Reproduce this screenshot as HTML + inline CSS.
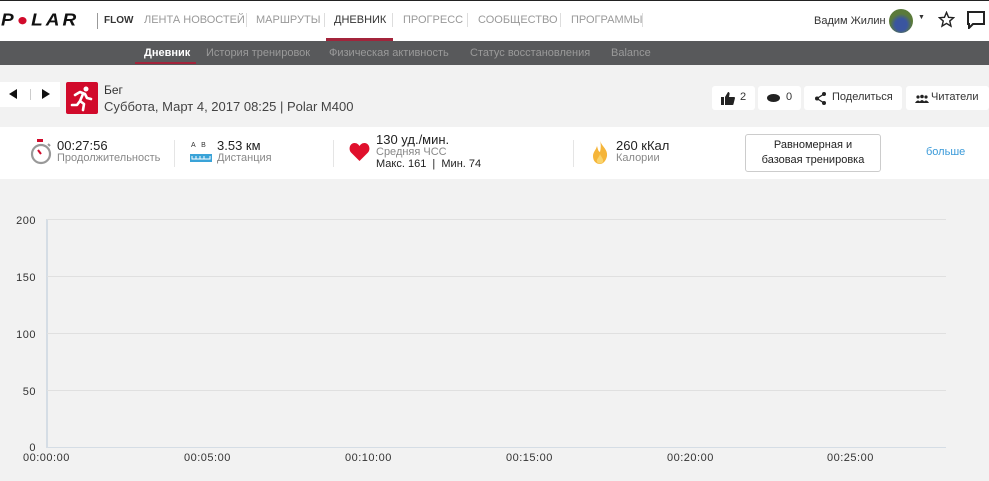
<!DOCTYPE html>
<html><head><meta charset="utf-8"><style>
*{margin:0;padding:0;box-sizing:border-box}
body{width:989px;height:481px;overflow:hidden;background:#f2f2f2;font-family:"Liberation Sans",Arial,sans-serif;position:relative;color:#333}
.a{position:absolute;white-space:nowrap}
.top{left:0;top:0;width:989px;height:41px;background:#fff;border-top:1px solid #222}
.nav{font-size:11px;color:#999;top:14px}
.sep{width:1px;height:14px;background:#ddd;top:13px}
.sub{left:0;top:41px;width:989px;height:24px;background:#58595b}
.subt{font-size:11px;color:#9a9a9a;top:47px}
.stats{left:0;top:127px;width:989px;height:52px;background:#fff}
.btn{background:#fff;border-radius:3px;height:24px;top:86px;font-size:11px;color:#333}
.grid{left:47px;width:899px;height:1px;background:#e0e0e0}
.yl{font-size:11px;color:#333;width:36px;text-align:right;left:0;letter-spacing:.5px}
.xl{font-size:11px;color:#333;top:452px;letter-spacing:.5px}
.lbl{font-size:11px;color:#888}
.val{font-size:13px;color:#222}
</style></head><body>
<div class="a top"></div>
<div class="a" style="left:1px;top:10px;font:italic 900 19px 'Liberation Sans';letter-spacing:3px;color:#111;transform:scaleY(0.9)">P<span style="color:#d10a2b">●</span>LAR</div>
<div class="a" style="left:97px;top:13px;width:1px;height:16px;background:#999"></div>
<div class="a" style="left:104px;top:15px;font-size:10px;font-weight:bold;color:#333">FLOW</div>
<div class="a nav" style="left:144px">ЛЕНТА НОВОСТЕЙ</div>
<div class="a sep" style="left:246px"></div>
<div class="a nav" style="left:256px">МАРШРУТЫ</div>
<div class="a sep" style="left:324px"></div>
<div class="a nav" style="left:334px;color:#333">ДНЕВНИК</div>
<div class="a" style="left:326px;top:38px;width:67px;height:3px;background:#a3243b"></div>
<div class="a sep" style="left:392px"></div>
<div class="a nav" style="left:403px">ПРОГРЕСС</div>
<div class="a sep" style="left:467px"></div>
<div class="a nav" style="left:478px">СООБЩЕСТВО</div>
<div class="a sep" style="left:560px"></div>
<div class="a nav" style="left:571px">ПРОГРАММЫ</div>
<div class="a sep" style="left:642px"></div>
<div class="a" style="left:814px;top:15px;font-size:11px;color:#333">Вадим Жилин</div>
<div class="a" style="left:889px;top:9px;width:24px;height:24px;border-radius:50%;background:radial-gradient(circle at 50% 65%,#3a55a0 30%,#5a7a3a 55%)"></div>
<div class="a" style="left:918px;top:14px;font-size:7px">▼</div>
<svg class="a" style="left:938px;top:11px" width="17" height="17" viewBox="0 0 24 24"><path d="M12 2l2.9 6.9 7.1.6-5.4 4.7 1.7 7.1L12 17.5 5.7 21.3l1.7-7.1L2 9.5l7.1-.6z" fill="none" stroke="#222" stroke-width="2"/></svg>
<svg class="a" style="left:967px;top:11px" width="18" height="18" viewBox="0 0 18 18"><path d="M1 1h16v12H6l-4 4V13H1z" fill="none" stroke="#222" stroke-width="2"/></svg>
<div class="a sub"></div>
<div class="a subt" style="left:144px;color:#fff;font-weight:bold">Дневник</div>
<div class="a" style="left:135px;top:62px;width:61px;height:2px;background:#a3243b"></div>
<div class="a subt" style="left:206px">История тренировок</div>
<div class="a subt" style="left:329px">Физическая активность</div>
<div class="a subt" style="left:470px">Статус восстановления</div>
<div class="a subt" style="left:611px">Balance</div>
<div class="a" style="left:0;top:82px;width:60px;height:25px;background:#fff"></div>
<svg class="a" style="left:9px;top:89px" width="8" height="10"><path d="M8 0v10L0 5z" fill="#111"/></svg>
<div class="a" style="left:30px;top:89px;width:1px;height:11px;background:#ccc"></div>
<svg class="a" style="left:42px;top:89px" width="8" height="10"><path d="M0 0v10l8-5z" fill="#111"/></svg>
<div class="a" style="left:66px;top:82px;width:32px;height:32px;background:#d10a2b;border-radius:2px"></div>
<svg class="a" style="left:66px;top:82px" width="32" height="32" viewBox="0 0 32 32"><circle cx="20" cy="7" r="2.5" fill="#fff"/><path d="M9 13l5-3 5 2 2 4 4 1M17 12l-3 7 4 3-1 6M14 19l-3 4-5 0" fill="none" stroke="#fff" stroke-width="2.6" stroke-linecap="round" stroke-linejoin="round"/></svg>
<div class="a" style="left:104px;top:83px;font-size:12px">Бег</div>
<div class="a" style="left:104px;top:99px;font-size:13px;color:#444">Суббота, Март 4, 2017 08:25 | Polar M400</div>
<div class="a btn" style="left:712px;width:43px"><svg class="a" style="left:9px;top:5px" width="14" height="14" viewBox="0 0 14 14"><path d="M0 6h3v8H0zM4 6l3-5c1 0 2 1 1.5 2.5L8 6h5c1 0 1 1 1 1l-1.5 6c0 .5-.5 1-1 1H4z" fill="#222"/></svg><span class="a" style="left:28px;top:5px">2</span></div>
<div class="a btn" style="left:758px;width:43px"><span class="a" style="left:9px;top:8px;width:13px;height:8px;border-radius:50%;background:#222"></span><span class="a" style="left:28px;top:5px">0</span></div>
<div class="a btn" style="left:804px;width:98px"><svg class="a" style="left:10px;top:6px" width="13" height="13" viewBox="0 0 13 13"><path d="M10 2L3 6.5 10 11" stroke="#222" stroke-width="1.3" fill="none"/><circle cx="10" cy="2" r="2" fill="#222"/><circle cx="3" cy="6.5" r="2" fill="#222"/><circle cx="10" cy="11" r="2" fill="#222"/></svg><span class="a" style="left:28px;top:5px">Поделиться</span></div>
<div class="a btn" style="left:906px;width:83px"><svg class="a" style="left:9px;top:8px" width="14" height="9" viewBox="0 0 14 9"><circle cx="3" cy="3" r="1.6" fill="#222"/><circle cx="7" cy="2.5" r="1.8" fill="#222"/><circle cx="11" cy="3" r="1.6" fill="#222"/><path d="M0 9q3-5 6 0M4 9q3-6 6 0M8 9q3-5 6 0" fill="#222"/></svg><span class="a" style="left:25px;top:5px">Читатели</span></div>
<div class="a stats"></div>
<svg class="a" style="left:30px;top:139px" width="22" height="26" viewBox="0 0 22 26"><rect x="7" y="0" width="6" height="3" fill="#d10a2b"/><circle cx="11" cy="15" r="9" fill="none" stroke="#999" stroke-width="2.2"/><path d="M11 15l-3-4" stroke="#d10a2b" stroke-width="2"/><path d="M18 5l2 2" stroke="#999" stroke-width="2"/></svg>
<div class="a val" style="left:57px;top:138px">00:27:56</div>
<div class="a lbl" style="left:57px;top:152px">Продолжительность</div>
<div class="a" style="left:174px;top:140px;width:1px;height:27px;background:#e5e5e5"></div>
<div class="a" style="left:191px;top:142px;font-size:7px;color:#333">A &nbsp; B</div>
<svg class="a" style="left:190px;top:154px" width="22" height="8"><rect width="22" height="8" fill="#3aa3d8"/><path d="M2 2v3h18V2M6 2v3M10 2v3M14 2v3" stroke="#fff" fill="none"/></svg>
<div class="a val" style="left:217px;top:138px">3.53 км</div>
<div class="a lbl" style="left:217px;top:152px">Дистанция</div>
<div class="a" style="left:333px;top:140px;width:1px;height:27px;background:#e5e5e5"></div>
<svg class="a" style="left:349px;top:143px" width="21" height="18" viewBox="0 0 21 18"><path d="M10.5 18L2 9.5C-1 6 1 0 5.5 0 8 0 9.5 1.5 10.5 3 11.5 1.5 13 0 15.5 0 20 0 22 6 19 9.5z" fill="#e0102c"/></svg>
<div class="a val" style="left:376px;top:132px">130 уд./мин.</div>
<div class="a lbl" style="left:376px;top:146px">Средняя ЧСС</div>
<div class="a" style="left:376px;top:158px;font-size:11px;color:#222">Макс. 161 &nbsp;| &nbsp;Мин. 74</div>
<div class="a" style="left:573px;top:140px;width:1px;height:27px;background:#e5e5e5"></div>
<svg class="a" style="left:592px;top:140px" width="16" height="24" viewBox="0 0 16 24"><path d="M8 0C9 6 16 9 15 16 14 21 11 24 8 24 4 24 1 21 1 16 1 12 4 10 5 6 6 9 6 11 8 12 9 8 9 4 8 0z" fill="#f5b53a"/><path d="M8 14c1 3 4 5 3 8-1 2-5 2-6 0-1-3 2-4 3-8z" fill="#f9d36b"/></svg>
<div class="a val" style="left:616px;top:138px">260 кКал</div>
<div class="a lbl" style="left:616px;top:152px">Калории</div>
<div class="a" style="left:745px;top:134px;width:136px;height:38px;border:1px solid #ccc;border-radius:3px;font-size:11px;text-align:center;line-height:15px;padding-top:3px;color:#222">Равномерная и<br>базовая тренировка</div>
<div class="a" style="left:926px;top:146px;font-size:11px;color:#3a9ad9">больше</div>
<div class="a" style="left:46px;top:219px;width:2px;height:229px;background:#d5dde5"></div>
<div class="a grid" style="top:219px"></div>
<div class="a grid" style="top:276px"></div>
<div class="a grid" style="top:333px"></div>
<div class="a grid" style="top:390px"></div>
<div class="a grid" style="top:447px;background:#d5dde5"></div>
<div class="a yl" style="top:215px">200</div>
<div class="a yl" style="top:272px">150</div>
<div class="a yl" style="top:329px">100</div>
<div class="a yl" style="top:386px">50</div>
<div class="a yl" style="top:442px">0</div>
<div class="a xl" style="left:23px">00:00:00</div>
<div class="a xl" style="left:184px">00:05:00</div>
<div class="a xl" style="left:345px">00:10:00</div>
<div class="a xl" style="left:506px">00:15:00</div>
<div class="a xl" style="left:667px">00:20:00</div>
<div class="a xl" style="left:827px">00:25:00</div>
</body></html>
